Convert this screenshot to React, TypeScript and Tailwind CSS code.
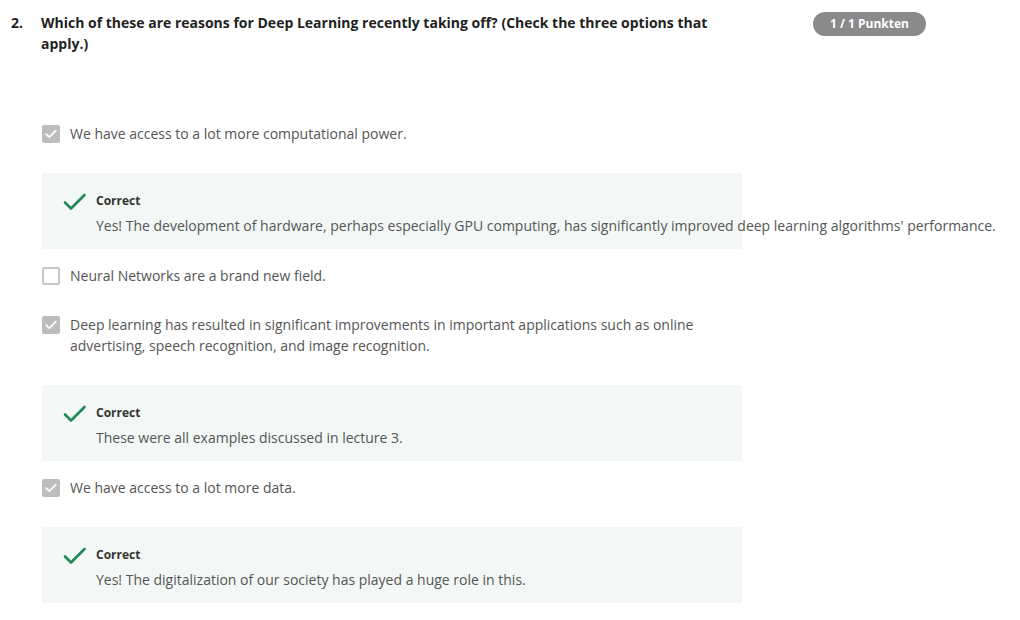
import React from "react";

type Option = {
    text: string;
    checked: boolean;
    feedback?: string;
}

const options: Option[] = [
    {
        text: "We have access to a lot more computational power.",
        checked: true,
        feedback: "Yes! The development of hardware, perhaps especially GPU computing, has significantly improved deep learning algorithms' performance.",
    },
    { text: "Neural Networks are a brand new field.", checked: false },
    {
        text: "Deep learning has resulted in significant improvements in important applications such as online advertising, speech recognition, and image recognition.",
        checked: true,
        feedback: "These were all examples discussed in lecture 3.",
    },
    {
        text: "We have access to a lot more data.",
        checked: true,
        feedback: "Yes! The digitalization of our society has played a huge role in this.",
    },
];

function Checkbox({ checked }: { checked: boolean }) {
    if (!checked) {
        return <div className="mt-[1.5px] h-[18px] w-[18px] shrink-0 rounded-[2px] border-2 border-[#c6c6c6] bg-white" />;
    }
    return (
        <div className="mt-[1.5px] flex h-[18px] w-[18px] shrink-0 items-center justify-center rounded-[2px] bg-[#bdbdbd]">
            <svg width="12" height="10" viewBox="0 0 12 10" fill="none">
                <path d="M1.2 5.2 L4.4 8.2 L10.8 1.6" stroke="white" strokeWidth="1.8" strokeLinecap="round" strokeLinejoin="round" />
            </svg>
        </div>
    );
}

function Feedback({ text }: { text: string }) {
    return (
        <div className="mb-[16px] h-[76px] w-[700px] bg-[#f3f8f6] pl-[21px] pt-[18px]">
            <div className="flex">
                <svg className="mt-[1px] shrink-0" width="24" height="20" viewBox="0 0 24 20" fill="none">
                    <path d="M2 10.5 L8 16.5 L21.5 3" stroke="#1f8a57" strokeWidth="2.6" strokeLinecap="round" strokeLinejoin="round" />
                </svg>
                <div className="ml-[9px]">
                    <div className="text-[12px] font-bold leading-[20px] text-[#333333]">Correct</div>
                    <div className="mt-[4px] whitespace-nowrap text-[14px] leading-[21px] text-[#555555]">{text}</div>
                </div>
            </div>
        </div>
    );
}

export default function App() {
    return (
        <div className="min-h-[620px] bg-white pl-[11px] pt-[12px]" style={{ fontFamily: '"Open Sans", "Liberation Sans", sans-serif' }}>
            <div className="flex items-start">
                <div className="w-[30px] shrink-0 text-[14px] font-bold leading-[21px] text-[#1f1f1f]">2.</div>
                <div className="w-[680px] shrink-0 text-[14px] font-bold leading-[21px] text-[#1f1f1f]">
                    Which of these are reasons for Deep Learning recently taking off? (Check the three options that apply.)
                </div>
                <div className="ml-[92px] flex h-[24px] w-[113px] shrink-0 items-center justify-center rounded-full bg-[#8a8a8a] text-[12px] font-bold text-white">
                    1 / 1 Punkten
                </div>
            </div>
            <div className="ml-[31px] mt-[69px]">
                {options.map((o, i) => (
                    <div key={i}>
                        <div className={o.feedback ? "mb-[29px] flex items-start gap-[10px]" : "mb-[28px] flex items-start gap-[10px]"}>
                            <Checkbox checked={o.checked} />
                            <div className="w-[672px] text-[14px] leading-[21px] text-[#555555]">{o.text}</div>
                        </div>
                        {o.feedback && <Feedback text={o.feedback} />}
                    </div>
                ))}
            </div>
        </div>
    );
}
